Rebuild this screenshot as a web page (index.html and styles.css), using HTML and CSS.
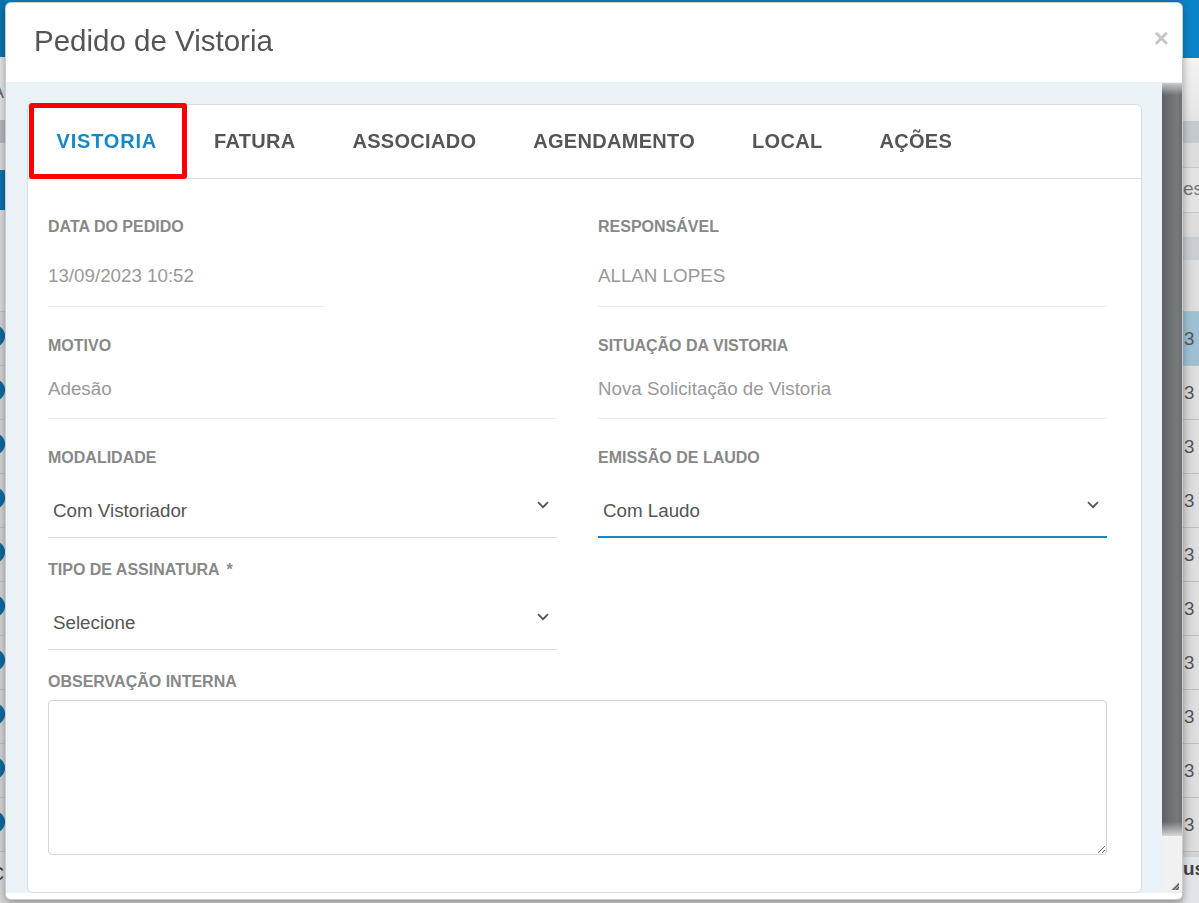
FILE: index.html
```html
<!DOCTYPE html>
<html lang="pt-BR">
<head>
<meta charset="utf-8">
<title>Pedido de Vistoria</title>
<link rel="stylesheet" href="styles.css">
</head>
<body>
<div class="page">
  <div class="strip strip-left">
    <div class="bg-top"></div>
    <div class="bg-sub"><span class="bg-letter">A</span></div>
    <div class="bg-thead"></div>
    <div class="bg-band"></div>
    <div class="bg-btn"></div>
    <div class="bg-gap"></div>
    <div class="bg-row"><span class="dot"></span></div>
    <div class="bg-row"><span class="dot"></span></div>
    <div class="bg-row"><span class="dot"></span></div>
    <div class="bg-row"><span class="dot"></span></div>
    <div class="bg-row"><span class="dot"></span></div>
    <div class="bg-row"><span class="dot"></span></div>
    <div class="bg-row"><span class="dot"></span></div>
    <div class="bg-row"><span class="dot"></span></div>
    <div class="bg-row"><span class="dot"></span></div>
    <div class="bg-row"><span class="dot"></span></div>
    <div class="bg-foot"><span class="bg-letter">C</span></div>
  </div>
  <div class="page-center">
    <div class="pc-top"></div>
    <div class="pc-rest"></div>
  </div>
  <div class="strip strip-right">
    <div class="rb-top"></div>
    <div class="rb-sub"></div>
    <div class="rb-thead"></div>
    <div class="rb-band"></div>
    <div class="rb-search">es</div>
    <div class="rb-band2"></div>
    <div class="rb-thead2"></div>
    <div class="rb-row rb-empty"></div>
    <div class="rb-row rb-selected">3</div>
    <div class="rb-row">3</div>
    <div class="rb-row">3</div>
    <div class="rb-row">3</div>
    <div class="rb-row">3</div>
    <div class="rb-row">3</div>
    <div class="rb-row">3</div>
    <div class="rb-row">3</div>
    <div class="rb-row">3</div>
    <div class="rb-row">3</div>
    <div class="rb-foot">us</div>
  </div>
</div>

<div class="modal" role="dialog" aria-labelledby="modal-title">
  <header class="modal-header">
    <h4 class="modal-title" id="modal-title">Pedido de Vistoria</h4>
    <button class="close" type="button" aria-label="Fechar">×</button>
  </header>
  <div class="modal-body">
    <div class="body-scroll">
      <section class="card">
        <nav class="tabs">
          <a class="tab active" href="#">VISTORIA</a>
          <a class="tab" href="#">FATURA</a>
          <a class="tab" href="#">ASSOCIADO</a>
          <a class="tab" href="#">AGENDAMENTO</a>
          <a class="tab" href="#">LOCAL</a>
          <a class="tab" href="#">AÇÕES</a>
        </nav>
        <div class="form">
          <div class="field static-field">
            <div class="label">DATA DO PEDIDO</div>
            <div class="static first short">13/09/2023 10:52</div>
          </div>
          <div class="field static-field">
            <div class="label">RESPONSÁVEL</div>
            <div class="static first">ALLAN LOPES</div>
          </div>

          <div class="field static-field">
            <div class="label">MOTIVO</div>
            <div class="static">Adesão</div>
          </div>
          <div class="field static-field">
            <div class="label">SITUAÇÃO DA VISTORIA</div>
            <div class="static">Nova Solicitação de Vistoria</div>
          </div>

          <div class="field select-field">
            <div class="label">MODALIDADE</div>
            <div class="select">
              <span>Com Vistoriador</span>
              <svg class="chevron" width="12" height="8" viewBox="0 0 12 8" aria-hidden="true"><polyline points="1,1.2 6,6.2 11,1.2" fill="none" stroke="#555" stroke-width="1.8"/></svg>
            </div>
          </div>
          <div class="field select-field">
            <div class="label">EMISSÃO DE LAUDO</div>
            <div class="select focused">
              <span>Com Laudo</span>
              <svg class="chevron" width="12" height="8" viewBox="0 0 12 8" aria-hidden="true"><polyline points="1,1.2 6,6.2 11,1.2" fill="none" stroke="#555" stroke-width="1.8"/></svg>
            </div>
          </div>

          <div class="field select-field">
            <div class="label">TIPO DE ASSINATURA<span class="req">*</span></div>
            <div class="select">
              <span>Selecione</span>
              <svg class="chevron" width="12" height="8" viewBox="0 0 12 8" aria-hidden="true"><polyline points="1,1.2 6,6.2 11,1.2" fill="none" stroke="#555" stroke-width="1.8"/></svg>
            </div>
          </div>
          <div class="field"></div>

          <div class="field textarea-field">
            <div class="label">OBSERVAÇÃO INTERNA</div>
            <textarea class="textarea" aria-label="Observação interna"></textarea>
          </div>
        </div>
      </section>
    </div>
    <div class="scrollbar" aria-hidden="true">
      <div class="thumb"></div>
      <div class="track"></div>
      <div class="resizer">
        <svg width="20" height="20" viewBox="0 0 20 20"><polygon points="17,9 17,17 9,17" fill="#9a9a9a"/><line x1="17" y1="11" x2="11" y2="17" stroke="#555" stroke-width="1"/><line x1="17" y1="14" x2="14" y2="17" stroke="#555" stroke-width="1"/></svg>
      </div>
    </div>
  </div>
  <footer class="modal-footer"></footer>
</div>
</body>
</html>
```

FILE: styles.css
```css
* { box-sizing: border-box; }
html, body { margin: 0; height: 100%; }
body {
  font-family: "Liberation Sans", Arial, sans-serif;
  background: #d9d9d9;
  overflow: hidden;
}

/* ---------- background page ---------- */
.page { display: flex; height: 903px; }
.strip { display: flex; flex-direction: column; overflow: hidden; flex: none; }
.strip > div { flex: none; }
.strip-left { width: 5px; background: #d6d6d6; }
.strip-right { width: 16px; background: #e0e0e0; }
.page-center { flex: 1; display: flex; flex-direction: column; }
.pc-top { flex: none; height: 57px; background: #0a7cbc; }
.pc-rest { flex: 1; background: #d9d9d9; }

.bg-top { height: 57px; background: #0b74b0; }
.bg-sub { height: 63px; background: #e6e6e6; padding-top: 25px; }
.bg-letter { display: block; margin-left: -8px; font-size: 18px; line-height: 20px; color: #666; }
.bg-thead { height: 23px; background: #b7bbbe; }
.bg-band { height: 27px; background: #dadada; }
.bg-btn { height: 40px; background: #0b72ad; }
.bg-gap { height: 102px; background: #dcdcdc; border-bottom: 1px solid #c4c4c4; }
.bg-row {
  height: 54px;
  display: flex;
  align-items: center;
  padding-bottom: 6px;
  background: #d4d4d4;
  border-bottom: 1px solid #c0c0c0;
}
.dot { flex: none; width: 22px; height: 22px; border-radius: 50%; background: #0d6aa1; margin-left: -17px; }
.bg-foot { flex: 1 !important; background: #d8d8d8; padding-top: 12px; }
.bg-foot .bg-letter { color: #333; margin-left: -9px; }

.rb-top { height: 58px; background: #0a84c6; }
.rb-sub { height: 63px; background: linear-gradient(#f4f4f4, #e4e4e4); }
.rb-thead { height: 22px; background: #c4cacd; }
.rb-band { height: 25px; background: #dddddd; border-bottom: 1px solid #c8c8c8; }
.rb-search {
  height: 45px;
  background: #e3e3e3;
  border-bottom: 1px solid #c8c8c8;
  font-size: 19px;
  line-height: 42px;
  color: #777;
  overflow: hidden;
  white-space: nowrap;
}
.rb-band2 { height: 24px; background: #dcdcdc; }
.rb-thead2 { height: 23px; background: #c7cdd1; }
.rb-row {
  height: 54px;
  background: linear-gradient(to right, #d6d6d6, #e0e0e0);
  border-bottom: 1px solid #bdbdbd;
  font-size: 18.75px;
  line-height: 53px;
  color: #555;
  padding-left: 1px;
}
.rb-empty { height: 52px; }
.rb-selected { background: #9fc0d4; }
.rb-foot {
  flex: 1 !important;
  background: #e2e5e8;
  border-top: 5px solid #d2d2d2;
  font-size: 19px;
  font-weight: bold;
  color: #444;
  line-height: 24px;
}

/* ---------- modal ---------- */
.modal {
  position: fixed;
  left: 5px;
  top: 2px;
  width: 1178px;
  height: 898px;
  background: #fff;
  border: 1px solid rgba(0, 0, 0, 0.2);
  border-radius: 6px;
  box-shadow: 0 3px 9px rgba(0, 0, 0, 0.35);
  display: flex;
  flex-direction: column;
  overflow: hidden;
}
.modal-header {
  flex: none;
  height: 79px;
  display: flex;
  align-items: center;
  justify-content: space-between;
  padding: 0 13px 3px 28px;
}
.modal-title {
  margin: 0;
  font-size: 29.5px;
  font-weight: normal;
  line-height: 1.1;
  color: #555;
}
.close {
  margin: -6px 0 0;
  padding: 0;
  border: 0;
  background: none;
  font-family: "Liberation Sans", Arial, sans-serif;
  font-size: 26px;
  font-weight: bold;
  line-height: 1;
  color: #c6c6c6;
  cursor: pointer;
}
.modal-body {
  flex: none;
  height: 811px;
  display: flex;
}
.body-scroll {
  flex: 1;
  background: #eaf2f8;
  padding: 22px 20px 0 21px;
  overflow: hidden;
}
.modal-footer { flex: 1; background: #fff; }

.scrollbar {
  flex: none;
  width: 20px;
  display: flex;
  flex-direction: column;
  background: #f1f1f1;
}
.thumb {
  flex: none;
  height: 753px;
  margin-top: 1px;
  background:
    linear-gradient(to bottom, rgba(210, 212, 213, 0.9), rgba(210, 212, 213, 0) 12px, rgba(210, 212, 213, 0) calc(100% - 14px), rgba(225, 226, 226, 0.9)),
    linear-gradient(to right, #5f6263 0%, #6c6f70 35%, #777a7b 75%, #6d7071 100%);
}
.track { flex: 1; }
.resizer { flex: none; height: 20px; }
.resizer svg { display: block; }

/* ---------- card ---------- */
.card {
  background: #fff;
  border: 1px solid #dcdcdc;
  border-radius: 6px;
}
.tabs {
  display: flex;
  height: 74px;
  border-bottom: 1px solid #ddd;
}
.tab {
  position: relative;
  padding: 0 28.5px;
  font-size: 20px;
  font-weight: bold;
  line-height: 73px;
  letter-spacing: 0.3px;
  color: #555;
  text-decoration: none;
  white-space: nowrap;
}
.tab.active { color: #1787ca; letter-spacing: 0.8px; }
.tab.active::after {
  content: "";
  position: absolute;
  left: 1px;
  right: -1.5px;
  top: -2px;
  bottom: -0.5px;
  border: 5px solid #f00;
  border-radius: 3px;
}

.form {
  display: grid;
  grid-template-columns: 509px 509px;
  column-gap: 41px;
  padding: 38px 34px 37px 20px;
}
.label {
  font-size: 16px;
  font-weight: bold;
  line-height: 20px;
  color: #888;
  white-space: nowrap;
}
.req { margin-left: 7px; }

.static-field { margin-bottom: 29px; }
.static {
  font-size: 18.75px;
  line-height: 20px;
  color: #999;
  padding: 23px 0 19px;
  border-bottom: 1px solid #eee;
}
.static.first { padding: 29px 0 20px; }
.static.short { width: 277px; }

.select-field { margin-bottom: 22px; }
.select {
  display: flex;
  justify-content: space-between;
  align-items: flex-start;
  padding: 33px 8px 16px 5px;
  font-size: 18.75px;
  line-height: 20px;
  color: #555;
  border-bottom: 1px solid #ddd;
}
.select.focused { border-bottom: 2px solid #1787ca; padding-bottom: 15px; }
.chevron { display: block; flex: none; }

.textarea-field { grid-column: 1 / -1; }
.textarea {
  display: block;
  width: 100%;
  height: 155px;
  margin: 8px 0 0;
  border: 1px solid #d5d5d5;
  border-radius: 4px;
  resize: vertical;
  font-family: "Liberation Sans", Arial, sans-serif;
  font-size: 18.75px;
  color: #555;
  background: #fff;
}
```
